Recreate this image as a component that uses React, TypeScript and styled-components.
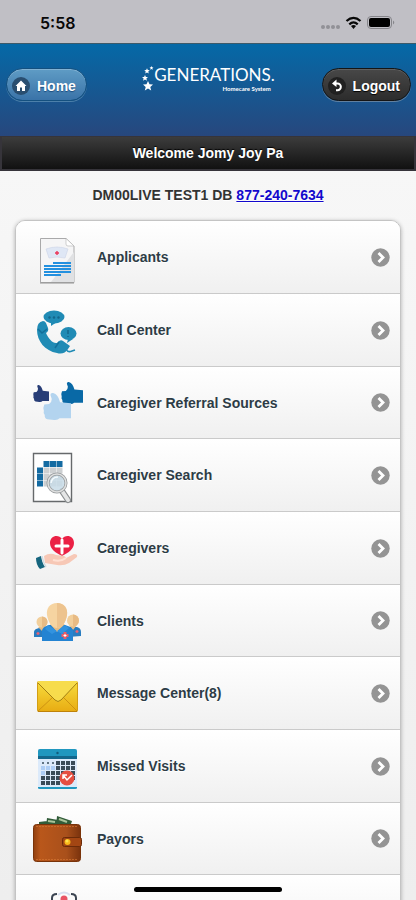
import React from "react";
import type { ReactNode } from "react";
import styled, { createGlobalStyle, css } from "styled-components";

const GlobalStyle = createGlobalStyle`
  * { box-sizing: border-box; }
  body {
    margin: 0;
    background: #f9f9f9;
    font-family: "Liberation Sans", Arial, Helvetica, sans-serif;
    font-size: 14px;
  }
`;

const Screen = styled.div`
  height: 100vh;
  display: flex;
  flex-direction: column;
  background: linear-gradient(#f9f9f9, #eeeeee);
`;

const StatusBar = styled.div`
  flex: none;
  height: 44px;
  padding: 3px 16px 0 40px;
  display: flex;
  align-items: center;
  justify-content: space-between;
  background: #c0bfc5;
  border-bottom: 1px solid #3c5a6a;
`;

const Clock = styled.time`
  font: 600 16px/20px Inter, "Liberation Sans", sans-serif;
  color: #080808;
`;

const StatusIcons = styled.svg`
  width: 80px;
  height: 18px;
`;

const Header = styled.header`
  flex: none;
  display: grid;
  grid-template-columns: 1fr auto 1fr;
  align-items: start;
  padding: 24px 5px 35px 6px;
  background: linear-gradient(#0569a7, #27477d);
`;

const HeaderButton = styled.button<{ $tone: "blue" | "dark" }>`
  height: 33px;
  padding: 2px 10px 0 5px;
  display: flex;
  align-items: center;
  gap: 7px;
  border-radius: 17px;
  color: #fff;
  font: bold 14px/18px "Liberation Sans", Arial, sans-serif;
  cursor: pointer;
  ${({ $tone }) =>
    $tone === "blue"
      ? css`
          justify-self: start;
          border: 1px solid #14507f;
          background: linear-gradient(#5f9cc5, #3a73a8);
          box-shadow: inset 0 1px 0 #82b2d3, 0 1px 0 #4c80aa;
          text-shadow: 0 1px 1px #194b7e;
        `
      : css`
          justify-self: end;
          border: 1px solid #151515;
          background: linear-gradient(#484848, #2c2c2c);
          box-shadow: inset 0 1px 0 #606060, 0 1px 0 #6080a0;
          text-shadow: 0 1px 1px #000;
        `}
`;

const ButtonIcon = styled.svg`
  width: 18px;
  height: 18px;
  flex: none;
`;

const Logo = styled.div`
  display: flex;
  align-items: flex-start;
  margin-top: -3px;
  color: #fff;
`;

const LogoStars = styled.svg`
  width: 12px;
  height: 28px;
  flex: none;
`;

const LogoWords = styled.div`
  display: flex;
  flex-direction: column;
  align-items: flex-end;
`;

const LogoName = styled.span`
  font: 17px/20px Lato, "Open Sans", sans-serif;
`;

const LogoTag = styled.span`
  padding-right: 4px;
  font: bold 6px/8px Lato, sans-serif;
`;

const Welcome = styled.h1`
  flex: none;
  margin: 0;
  padding: 8px 10px 7px;
  border: 1px solid #36343a;
  border-width: 1px 2px 2px;
  background: linear-gradient(#3c3c3c, #111);
  color: #fff;
  font-size: 14px;
  line-height: 17px;
  text-align: center;
  text-shadow: 0 -1px 1px #000;
`;

const Main = styled.main`
  flex: 1;
  min-height: 0;
  overflow-y: auto;
  scrollbar-width: none;
  padding: 14px 15px 48px;
`;

const Database = styled.p`
  margin: 0 0 15px;
  color: #333;
  font-weight: bold;
  line-height: 20px;
  text-align: center;
  text-shadow: 0 1px 0 #fff;
`;

const Phone = styled.a`
  color: #1208cc;
`;

const Menu = styled.ul`
  margin: 0;
  padding: 0;
  list-style: none;
  overflow: hidden;
  border: 1px solid #c4c4c4;
  border-radius: 10px;
  box-shadow: 0 1px 4px rgba(0, 0, 0, 0.3);
`;

const MenuItem = styled.li`
  height: 73px;
  border-bottom: 1px solid #cacaca;
  background: linear-gradient(#ffffff, #f0f0f0);
  &:nth-child(3n) {
    height: 72px;
  }
`;

const MenuLink = styled.a`
  height: 100%;
  padding: 0 10px 0 12px;
  display: flex;
  align-items: center;
  gap: 9px;
  color: #2d3c46;
  text-decoration: none;
  text-shadow: 0 1px 0 #fff;
`;

const MenuIcon = styled.svg`
  width: 60px;
  height: 60px;
  flex: none;
`;

const MenuLabel = styled.span`
  flex: 1;
  font-weight: bold;
  line-height: 20px;
`;

const Arrow = styled.svg`
  width: 19px;
  height: 19px;
  flex: none;
`;

const HomeIndicator = styled.div`
  position: fixed;
  bottom: 8px;
  left: 50%;
  width: 148px;
  height: 5px;
  margin-left: -74px;
  border-radius: 3px;
  background: #000;
`;

const star = "M0-5 1.5-1.7 5-1.5 2.3.9 3.2 4.5 0 2.6-3.2 4.5-2.3.9-5-1.5-1.5-1.7Z";

function ThumbUp({ x, y, w, h, fill }: { x: number; y: number; w: number; h: number; fill: string }) {
  return (
    <g transform={`translate(${x} ${y}) scale(${w / 64} ${h / 64})`} fill={fill}>
      <path d="M3 27 14 26Q20 22 20 14L17 5Q17-1 23 0C31 2 36 10 39 22L64 24V60L38 60Q34 65 25 64L10 62Q3 60 4 52 0 48 2 42-1 36 3 27Z" />
    </g>
  );
}

const range = (n: number) => Array.from({ length: n }, (_, i) => i);

const art: Record<string, ReactNode> = {
  applicants: (
    <>
      <path d="M12.5 11.5H38L46 19V55.5H12.5Z" fill="#f5f5f6" stroke="#a9a9aa" />
      <path d="M46 25V55H23Z" fill="#e0e1e3" />
      <path d="M38 11.5V17Q38 19 40 19H46Z" fill="#fff" stroke="#bbb" strokeWidth=".7" />
      <path d="M18 22Q29 18 40 22L37 31Q29 29 21 31Z" fill="#dfe7f5" stroke="#cbd3e8" strokeWidth=".6" />
      <path d="M29 24V28M27 26H31" stroke="#ec3558" strokeWidth="1.4" />
      <path d="M25 36H43M16 39H43M16 42H43M16 45H43M16 48H33" stroke="#2390df" strokeWidth="1.8" />
      <path d="M12 56H46" stroke="#929292" />
    </>
  ),
  calls: (
    <>
      <g fill="#208bb5">
        <ellipse cx="26" cy="17" rx="10.5" ry="6.5" />
        <path d="M23 22 23 26 29 22Z" />
        <ellipse cx="40.5" cy="33.5" rx="8" ry="6.5" />
        <path d="M40 39 39 43 45 39Z" />
        <path d="M15 21Q9 22 9 30C9 41 17 51 29 53Q36 55 40 49L42 46 35 41Q32 39 29 43C25 44 20 38 18 33Q21 31 20 28L18 23Q17 21 15 21Z" />
      </g>
      <path d="M10 29 14 33 19 29M27 48 31 42" fill="none" stroke="#136f9a" strokeWidth="1.5" />
      <path d="M40 30V34M40 36V37" stroke="#14678c" strokeWidth="1.5" />
      <g fill="#12658b">
        <circle cx="21.5" cy="17.5" r="1.2" />
        <circle cx="26" cy="17.5" r="1.2" />
        <circle cx="30.5" cy="17.5" r="1.2" />
      </g>
      <path d="M38 49Q40 53 44 51L47 50" stroke="#208bb5" fill="none" strokeWidth="1.6" />
    </>
  ),
  referrals: (
    <>
      <ThumbUp x={5} y={12} w={16} h={17} fill="#283e77" />
      <ThumbUp x={33} y={9} w={22} h={22} fill="#0969a6" />
      <ThumbUp x={15} y={20} w={28} h={27} fill="#b3d4ef" />
    </>
  ),
  search: (
    <>
      <path d="M5.5 8.5H43.5V56.5H5.5Z" fill="#fff" stroke="#66696b" strokeWidth="1.4" />
      {range(4).map((r) =>
        range(4).map((c) =>
          r === 0 && c === 0 ? null : (
            <rect key={`${r}-${c}`} x={9 + c * 6.5} y={16 + r * 6.5} width="6" height="6" fill={r === 0 || c === 0 ? "#146ba2" : "#cdd0d2"} />
          ),
        ),
      )}
      <path d="M34 46 40 55" stroke="#8c8f91" strokeWidth="6" strokeLinecap="round" />
      <path d="M34 46 40 55" stroke="#e5e6e6" strokeWidth="4" strokeLinecap="round" />
      <circle cx="29" cy="38" r="9" fill="#c8dce8" fillOpacity=".85" stroke="#969a9c" strokeWidth="3" />
      <circle cx="29" cy="38" r="9" fill="none" stroke="#dedfdf" strokeWidth="1.5" />
      <path d="M23 38Q24 32 30 32" stroke="#f4fafd" fill="none" strokeWidth="1.5" />
    </>
  ),
  caregivers: (
    <>
      <path d="M34 38C28 35 22 31 22 25C22 17 31 16 34 21C37 16 46 17 46 25C46 31 40 35 34 38Z" fill="#eb2145" />
      <path d="M34 22V35M28 28H40" stroke="#fff" strokeWidth="3" strokeLinecap="round" />
      <path d="M16 38Q22 34 28 37L36 38Q40 40 36 41L46 36Q50 36 49 39L41 45Q36 48 29 47L17 45Z" fill="#f7c8b6" />
      <path d="M25 42Q33 44 38 40" fill="none" stroke="#ffe0d3" strokeWidth="2" />
      <path d="M8 40 13 38Q14 45 17 49L12 51Q8 47 8 40Z" fill="#16657e" />
      <path d="M14 38Q15 44 18 49" fill="none" stroke="#d0dce3" strokeWidth="1.5" />
    </>
  ),
  clients: (
    <>
      <path d="M6 46V41Q6 38 11 37H18L21 46ZM40 46 42 36H49Q53 37 53 41V45Z" fill="#287cc0" />
      <path d="M10 36 14 40 18 36M41 34 45 39 49 34" fill="#e6bb83" />
      <circle cx="14" cy="31" r="5.5" fill="#f2cf9b" />
      <circle cx="45" cy="29.5" r="6" fill="#f2cf9b" />
      <path d="M14 25.5A5.5 5.5 0 0 1 14 36.5ZM45 23.5A6 6 0 0 1 45 35.5Z" fill="#e8bb84" />
      <path d="M14 50V40Q14 36 21 34H37Q45 36 45 40V50Z" fill="#2383d2" />
      <path d="M22 33 29 41 37 33Z" fill="#e8bd84" />
      <path d="M29 12C36 12 40 17 39 24C38 31 34 37 29 37S20 31 19 24C18 17 22 12 29 12Z" fill="#f6d4a1" />
      <path d="M29 12C36 12 40 17 39 24C38 31 34 37 29 37Z" fill="#edc38e" />
      <path d="M20 34 17 38 24 43 29 40 34 43 41 37 37 34 29 40Z" fill="#3293df" />
      <path d="M37 41V48M33.5 44.5H40.5" stroke="#ef5c66" strokeWidth="3" />
      <path d="M37 43V46M35.5 44.5H38.5" stroke="#fff" />
      <path d="M10 41V44M8.5 42.5H11.5M49 39V42M47.5 40.5H50.5" stroke="#ed6373" strokeWidth="1.3" />
    </>
  ),
  messages: (
    <>
      <defs>
        <linearGradient id="mail" x2="0" y2="1">
          <stop stopColor="#f7dc3d" />
          <stop offset="1" stopColor="#e8ac12" />
        </linearGradient>
      </defs>
      <rect x="9.5" y="18.5" width="40" height="30" rx="1" fill="url(#mail)" stroke="#d39e14" />
      <path d="M10 48 25 34M49 48 35 34" stroke="#ca8e10" strokeWidth=".9" />
      <path d="M10 20 27 37Q30 40 33 37L49 20V18H10Z" fill="#f7dc4c" />
      <path d="M10 20 27 37Q30 40 33 37L49 20" fill="none" stroke="#a37f13" />
      <path d="M10 48.5H49" stroke="#bf8209" />
    </>
  ),
  visits: (
    <>
      <rect x="10" y="13" width="39" height="40" rx="1" fill="#dceafa" />
      <path d="M10 22V15Q10 13 12 13H47Q49 13 49 15V22Z" fill="#2097bf" />
      <path d="M10 20H49V23H10Z" fill="#13678c" />
      <circle cx="29.5" cy="17" r="1.2" fill="#125b7b" />
      {range(5).map((r) =>
        range(7).map((c) => {
          const pale = r < 2 && c < 3;
          if (r === 4 && c > 3) return null;
          return (
            <rect
              key={`${r}-${c}`}
              x={(pale && r === 0 ? 14 : 13) + c * 5}
              y={(pale && r === 0 ? 26 : 25) + r * 5}
              width={pale && r === 0 ? 2 : 4}
              height={pale && r === 0 ? 2 : 4}
              fill={pale ? (r === 0 ? "#607483" : "#adcdf4") : r === 2 && c === 0 ? "#adcdf4" : "#394b58"}
            />
          );
        }),
      )}
      <path d="M10 51H49V52Q49 53 47 53H12Q10 53 10 52Z" fill="#2097bf" />
      <circle cx="39" cy="42" r="7.5" fill="#e64f42" />
      <path d="M35 43V39H39M35 39 39 44 44 39" fill="none" stroke="#fff" strokeWidth="1.5" />
    </>
  ),
  payors: (
    <>
      <defs>
        <linearGradient id="leather">
          <stop stopColor="#91400f" />
          <stop offset=".15" stopColor="#b9571b" />
          <stop offset=".7" stopColor="#a9501b" />
          <stop offset="1" stopColor="#7b330d" />
        </linearGradient>
      </defs>
      <path d="M11 13 19 12V17H11ZM19 9 30 11 28 18H18ZM29 7 44 12 42 18H28Z" fill="#315c39" />
      <path d="M20 12 27 13M31 10 39 13" stroke="#a9c49a" strokeWidth="2" />
      <rect x="5.5" y="15.5" width="47" height="37" rx="3" fill="url(#leather)" stroke="#793309" />
      <path d="M8 17.5H50M8 50.5H50" stroke="#d37431" strokeWidth=".7" strokeDasharray="2 1" />
      <rect x="34.5" y="28.5" width="19" height="9" rx="2" fill="#a34613" stroke="#6b2b09" />
      <circle cx="39.5" cy="33" r="3" fill="#f9b91b" />
      <circle cx="39" cy="32" r="1.5" fill="#ffe54e" />
    </>
  ),
  scan: (
    <>
      <path d="M24 22V17Q24 13 29 13M43 13Q48 13 48 17V22M24 38V43Q24 47 29 47M43 47Q48 47 48 43V38" fill="none" stroke="#3d4652" strokeWidth="2" />
      <circle cx="36" cy="18" r="3.5" fill="#e95465" />
      <path d="M30 14Q36 9 42 14" fill="none" stroke="#d8e0f0" strokeWidth="2" />
      <path d="M29 32Q29 23 36 23T43 32Z" fill="#e95465" />
    </>
  ),
};

const items = [
  { icon: "applicants", label: "Applicants" },
  { icon: "calls", label: "Call Center" },
  { icon: "referrals", label: "Caregiver Referral Sources" },
  { icon: "search", label: "Caregiver Search" },
  { icon: "caregivers", label: "Caregivers" },
  { icon: "clients", label: "Clients" },
  { icon: "messages", label: "Message Center(8)" },
  { icon: "visits", label: "Missed Visits" },
  { icon: "payors", label: "Payors" },
  { icon: "scan", label: "" },
];

export default function App() {
  return (
    <Screen>
      <GlobalStyle />
      <StatusBar>
        <Clock>5:58</Clock>
        <StatusIcons viewBox="0 0 80 18" aria-hidden="true">
          <g fill="#919197">
            {range(4).map((i) => (
              <circle key={i} cx={3 + i * 5} cy="13" r="2" />
            ))}
          </g>
          <path
            d="M26.5 7Q33.5 .8 40.5 7M29.300 10.300Q33.500 6.500 37.700 10.300"
            fill="none"
            stroke="#080808"
            strokeWidth="2.300"
          />
          <path d="M31 12Q33.500 10 36 12L33.500 15Z" fill="#080808" />
          <rect x="47.500" y="2.500" width="24" height="12" rx="3.500" fill="none" stroke="#85858a" />
          <rect x="49" y="4" width="21" height="9" rx="2" fill="#000" />
          <path d="M73 6.500Q75.500 8.500 73 10.500Z" fill="#85858a" />
        </StatusIcons>
      </StatusBar>
      <Header>
        <HeaderButton type="button" $tone="blue">
          <ButtonIcon viewBox="0 0 18 18" aria-hidden="true">
            <circle cx="9" cy="9" r="9" fill="#294e70" />
            <path d="M9 3.500 3.500 9H5V14H8V10.500H10V14H13V9H14.500Z" fill="#fff" />
          </ButtonIcon>
          Home
        </HeaderButton>
        <Logo>
          <LogoStars viewBox="0 0 12 28" fill="#fff" aria-hidden="true">
            <path transform="translate(9.500 3) scale(.4)" d={star} />
            <path transform="translate(5 6) scale(.55)" d={star} />
            <path transform="translate(3 13) scale(.6)" d={star} />
            <path transform="translate(6 21)" d={star} />
          </LogoStars>
          <LogoWords>
            <LogoName>GENERATIONS.</LogoName>
            <LogoTag>Homecare System</LogoTag>
          </LogoWords>
        </Logo>
        <HeaderButton type="button" $tone="dark">
          <ButtonIcon viewBox="0 0 18 18" aria-hidden="true">
            <circle cx="9" cy="9" r="9" fill="#202020" />
            <path d="M6 6.500H9.500A3.300 3.300 0 0 1 9.500 13.200H8" fill="none" stroke="#fff" strokeWidth="2" />
            <path d="M8.500 2.500V10L4 6.500Z" fill="#fff" />
          </ButtonIcon>
          Logout
        </HeaderButton>
      </Header>
      <Welcome>Welcome Jomy Joy Pa</Welcome>
      <Main>
        <Database>
          DM00LIVE TEST1 DB <Phone href="tel:877-240-7634">877-240-7634</Phone>
        </Database>
        <Menu>
          {items.map((item) => (
            <MenuItem key={item.icon}>
              <MenuLink href="#">
                <MenuIcon viewBox="0 0 60 60" aria-hidden="true">
                  {art[item.icon]}
                </MenuIcon>
                <MenuLabel>{item.label}</MenuLabel>
                <Arrow viewBox="0 0 19 19" aria-hidden="true">
                  <circle cx="9.500" cy="9.500" r="9.200" fill="#949494" />
                  <path d="M7.500 5 12 9.500 7.500 14" fill="none" stroke="#fff" strokeWidth="2.800" />
                </Arrow>
              </MenuLink>
            </MenuItem>
          ))}
        </Menu>
      </Main>
      <HomeIndicator />
    </Screen>
  );
}
